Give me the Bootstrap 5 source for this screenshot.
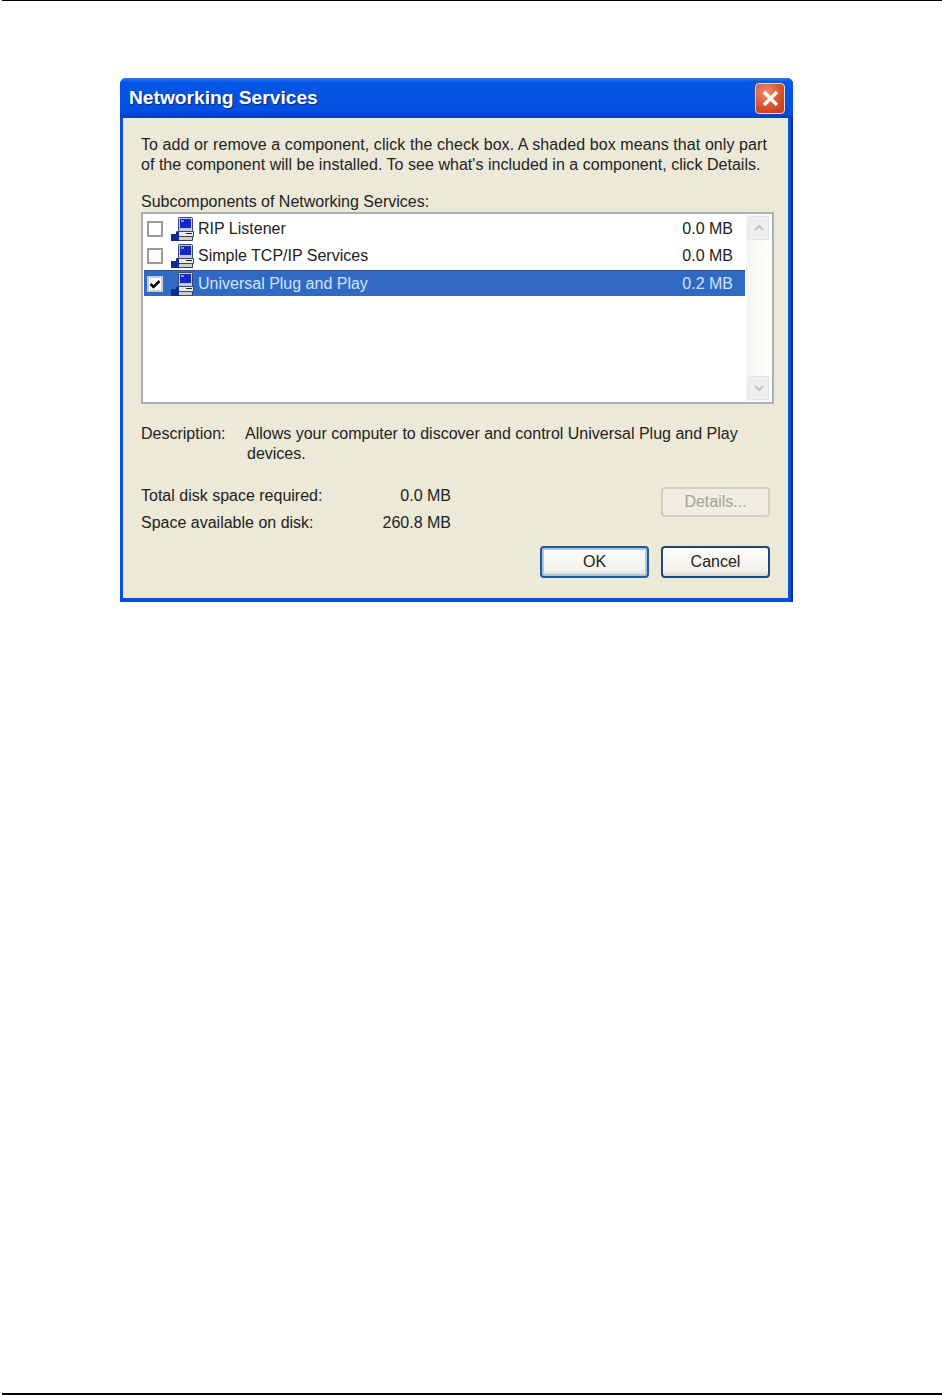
<!DOCTYPE html>
<html lang="en">
  <head>
    <meta charset="UTF-8" />
    <meta name="viewport" content="width=device-width, initial-scale=1" />
    <title>Networking Services</title>
    <link href="https://cdn.jsdelivr.net/npm/bootstrap@5.3.3/dist/css/bootstrap.min.css" rel="stylesheet" />
    <style>
      body { background: #fff; font-family: "Liberation Sans", Arial, sans-serif; font-size: 16px; line-height: 20px; color: #222; }
      .page-wrap { height: 1395px; border-top: 1px solid #000; border-bottom: 2px solid #000; margin-left: 2px; padding: 77px 0 0 118px; }
      .xp-dialog { width: 673px; height: 524px; border: 0; border-radius: 6px 6px 0 0; background: #0a4fdc; padding: 0 5px 4px 3px; box-shadow: inset -2px 0 0 #0c2f9a; }
      .xp-title { height: 40px; margin: 0 -5px 0 -3px; padding: 0 8px 0 9px; border-radius: 6px 6px 0 0; background: linear-gradient(#2a7df0 0, #0556e6 10%, #0450e0 80%, #0a3fb8 100%); }
      .xp-title span { color: #fff; font-weight: 700; font-size: 19.2px; text-shadow: 1px 1px 1px #0a2a80; }
      .xp-close { width: 30px; height: 31px; border: 1px solid #e8ddd0; border-radius: 4px; background: radial-gradient(circle at 35% 30%, #ef9070, #d9502c 55%, #b83a1a); padding: 0; }
      .xp-client { background: #ece9d8; padding: 17px 14px 0 18px; height: 480px; }
      .xp-line-a { letter-spacing: .083px; }
      .xp-line-b { letter-spacing: .035px; }
      .xp-sub { margin-top: 17px; }
      .xp-list { height: 192px; border: 2px solid #aab1b6; background: #fff; padding: 1px; width: 633px; }
      .xp-rows { width: 601px; flex: none; }
      .xp-row { height: 27px; border: 0; padding: 0 12px 0 3px; background: transparent; color: #222; font-size: 16px; }
      .xp-row.is-picked { height: 26px; margin-top: 1px; background: #316ac5; color: #cfe4f7; border-top: 1px dotted #1c3f80; border-bottom: 1px dotted #1c3f80; }
      .xp-row .form-check-input { width: 16px; height: 16px; margin: 0 7px 0 0; border: 2px solid #9a9a9a; border-radius: 0; background-color: #fff; flex: none; }
      .xp-row .form-check-input:checked { background-color: #fff; border-color: #ccc; --bs-form-check-bg-image: url("data:image/svg+xml,%3csvg xmlns='http://www.w3.org/2000/svg' viewBox='0 0 16 16'%3e%3cpath fill='none' stroke='%23000' stroke-width='3.4' d='M2 8l4 4 8-8'/%3e%3c/svg%3e"); }
      .xp-row svg { flex: none; margin-right: 4px; }
      .xp-scroll { width: 26px; background: linear-gradient(90deg, #f6f5ef, #fdfdfb); padding: 1px 2px; margin-left: 1px; }
      .xp-arrow { height: 24px; border: 1px solid #dfe3e8; border-radius: 2px; background: #eef0f0; }
      .xp-desc { margin-top: 20px; }
      .xp-desc-label { width: 104px; flex: none; }
      .xp-indent { padding-left: 2px; }
      .xp-sizes { margin-top: 18px; padding-right: 4px; height: 54px; }
      .xp-size-row { height: 27px; align-items: center; }
      .xp-size-label { width: 210px; }
      .xp-size-value { width: 100px; text-align: right; }
      .xp-btn { width: 109px; height: 32px; padding: 0; font-size: 16px; line-height: 1; color: #222; border: 2px solid #1c4a78; border-radius: 4px; background: linear-gradient(#fdfdfa, #f3f1ea 80%, #dcd8c8); }
      .xp-btn:hover { color: #222; border-color: #1c4a78; }
      .xp-btn.is-default { border-color: #1f5a96; box-shadow: inset 0 0 0 2px #a9c6ec; }
      .xp-btn:disabled { height: 30px; margin-top: 5px; color: #a3a192; border-color: #d3d0c0; background: #f0eee2; opacity: 1; }
      .xp-actions { margin-top: 10px; padding-right: 4px; gap: 12px; }
    </style>
  </head>
  <body>
    <svg width="0" height="0" class="position-absolute">
      <symbol id="netpc" viewBox="0 0 24 24">
        <rect x="8.5" y=".5" width="14" height="14" rx="1" fill="#c4cbdf" stroke="#34456e" />
        <rect x="10" y="2" width="11" height="9" fill="#1426c8" />
        <rect x="11" y="3" width="3" height="2" fill="#5fa8f0" />
        <path d="M6.5 14.5h17v5h-17z" fill="#ecebe2" stroke="#34456e" />
        <path d="M8.5 19.5h14v4h-14z" fill="#cfcdc4" stroke="#34456e" />
        <path d="M16 16.5h6" stroke="#222" />
        <path d="M1 17h5v-2h3v9H1z" fill="#0a2f90" />
      </symbol>
    </svg>

    <div class="page-wrap">
      <div class="card xp-dialog">
        <!-- Title bar -->
        <div class="xp-title d-flex align-items-center justify-content-between">
          <span>Networking Services</span>
          <button type="button" class="xp-close d-flex align-items-center justify-content-center">
            <svg width="19" height="19" viewBox="0 0 19 19"><path d="M3 3l13 13M16 3L3 16" stroke="#fff" stroke-width="3.4" /></svg>
          </button>
        </div>

        <!-- Dialog body -->
        <div class="xp-client">
          <div class="xp-line-a">To add or remove a component, click the check box. A shaded box means that only part</div>
          <div class="xp-line-b">of the component will be installed. To see what's included in a component, click Details.</div>
          <div class="xp-sub">Subcomponents of Networking Services:</div>

          <div class="xp-list d-flex">
            <div class="list-group list-group-flush rounded-0 xp-rows">
              <div class="list-group-item xp-row d-flex align-items-center">
                <input class="form-check-input" type="checkbox" />
                <svg width="24" height="24"><use href="#netpc" /></svg>
                <span class="flex-grow-1">RIP Listener</span><span>0.0 MB</span>
              </div>
              <div class="list-group-item xp-row d-flex align-items-center">
                <input class="form-check-input" type="checkbox" />
                <svg width="24" height="24"><use href="#netpc" /></svg>
                <span class="flex-grow-1">Simple TCP/IP Services</span><span>0.0 MB</span>
              </div>
              <div class="list-group-item xp-row is-picked d-flex align-items-center">
                <input class="form-check-input" type="checkbox" checked />
                <svg width="24" height="24"><use href="#netpc" /></svg>
                <span class="flex-grow-1">Universal Plug and Play</span><span>0.2 MB</span>
              </div>
            </div>
            <div class="xp-scroll d-flex flex-column justify-content-between">
              <div class="xp-arrow d-flex align-items-center justify-content-center">
                <svg width="12" height="8" viewBox="0 0 12 8"><path d="M2 6l4-4 4 4" fill="none" stroke="#bcc4cc" stroke-width="2" /></svg>
              </div>
              <div class="xp-arrow d-flex align-items-center justify-content-center">
                <svg width="12" height="8" viewBox="0 0 12 8"><path d="M2 2l4 4 4-4" fill="none" stroke="#bcc4cc" stroke-width="2" /></svg>
              </div>
            </div>
          </div>

          <div class="d-flex xp-desc">
            <div class="xp-desc-label">Description:</div>
            <div>
              <div>Allows your computer to discover and control Universal Plug and Play</div>
              <div class="xp-indent">devices.</div>
            </div>
          </div>

          <div class="d-flex justify-content-between xp-sizes">
            <div>
              <div class="d-flex xp-size-row"><div class="xp-size-label">Total disk space required:</div><div class="xp-size-value">0.0 MB</div></div>
              <div class="d-flex xp-size-row"><div class="xp-size-label">Space available on disk:</div><div class="xp-size-value">260.8 MB</div></div>
            </div>
            <button type="button" class="btn xp-btn" disabled>Details...</button>
          </div>

          <div class="d-flex justify-content-end xp-actions">
            <button type="button" class="btn xp-btn is-default">OK</button>
            <button type="button" class="btn xp-btn">Cancel</button>
          </div>
        </div>
      </div>
    </div>

    <script src="https://cdn.jsdelivr.net/npm/bootstrap@5.3.3/dist/js/bootstrap.bundle.min.js"></script>
  </body>
</html>
